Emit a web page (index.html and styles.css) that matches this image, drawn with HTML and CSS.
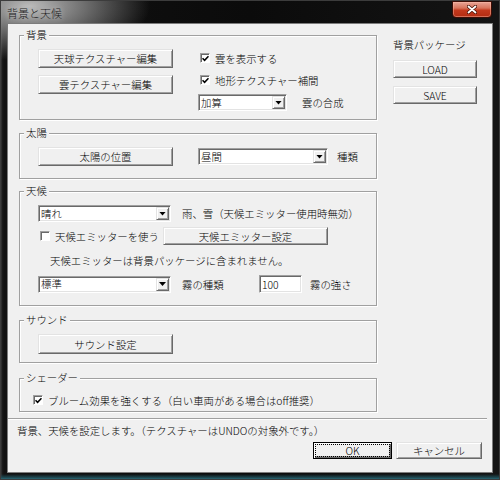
FILE: index.html
```html
<!DOCTYPE html>
<html lang="ja">
<head>
    <meta charset="UTF-8">
    <meta name="viewport" content="width=device-width, initial-scale=1.0">
    <title>背景と天候</title>
    <link rel="stylesheet" href="styles.css">
</head>
<body>
    <div class="window">
        <header class="titlebar">
            <span class="title">背景と天候</span>
            <button class="close-btn" aria-label="閉じる">
                <svg width="10" height="9" viewBox="0 0 10 9">
                    <path d="M1.5 1.5l7 6M8.5 1.5l-7 6" stroke="#4a1206" stroke-width="3.4" stroke-linecap="round"/>
                    <path d="M1.5 1.5l7 6M8.5 1.5l-7 6" stroke="#fff" stroke-width="1.8" stroke-linecap="round"/>
                </svg>
            </button>
        </header>

        <div class="frame">
            <div class="client">
                <div class="main">
                    <div class="groups">
                        <!-- 背景 -->
                        <fieldset class="group group-bg">
                            <legend>背景</legend>
                            <div class="group-body bg-body">
                                <div class="btn-col">
                                    <button class="btn btn-wide">天球テクスチャー編集</button>
                                    <button class="btn btn-wide">雲テクスチャー編集</button>
                                </div>
                                <div class="opt-col">
                                    <label class="check">
                                        <span class="box"><svg width="7" height="7" viewBox="0 0 7 7"><path d="M0.5 3.2 2.6 5.3 6.5 1.2" fill="none" stroke="#000" stroke-width="1.6"/></svg></span>
                                        雲を表示する
                                    </label>
                                    <label class="check">
                                        <span class="box"><svg width="7" height="7" viewBox="0 0 7 7"><path d="M0.5 3.2 2.6 5.3 6.5 1.2" fill="none" stroke="#000" stroke-width="1.6"/></svg></span>
                                        地形テクスチャー補間
                                    </label>
                                    <div class="row">
                                        <div class="combo combo-blend"><span class="combo-text">加算</span><span class="drop"></span></div>
                                        <span class="lbl-blend">雲の合成</span>
                                    </div>
                                </div>
                            </div>
                        </fieldset>

                        <!-- 太陽 -->
                        <fieldset class="group group-sun">
                            <legend>太陽</legend>
                            <div class="group-body row">
                                <button class="btn btn-wide">太陽の位置</button>
                                <div class="combo combo-sun"><span class="combo-text">昼間</span><span class="drop"></span></div>
                                <span class="lbl-kind">種類</span>
                            </div>
                        </fieldset>

                        <!-- 天候 -->
                        <fieldset class="group group-weather">
                            <legend>天候</legend>
                            <div class="group-body weather-body">
                                <div class="row">
                                    <div class="combo combo-weather"><span class="combo-text">晴れ</span><span class="drop"></span></div>
                                    <span class="lbl-rain">雨、雪（天候エミッター使用時無効）</span>
                                </div>
                                <div class="row">
                                    <label class="check check-emitter">
                                        <span class="box"></span>
                                        天候エミッターを使う
                                    </label>
                                    <button class="btn btn-emitter">天候エミッター設定</button>
                                </div>
                                <div class="note">天候エミッターは背景パッケージに含まれません。</div>
                                <div class="row">
                                    <div class="combo combo-weather"><span class="combo-text">標準</span><span class="drop"></span></div>
                                    <span class="lbl-fog">霧の種類</span>
                                    <div class="field">100</div>
                                    <span class="lbl-strength">霧の強さ</span>
                                </div>
                            </div>
                        </fieldset>

                        <!-- サウンド -->
                        <fieldset class="group group-sound">
                            <legend>サウンド</legend>
                            <div class="group-body">
                                <button class="btn btn-wide btn-sound">サウンド設定</button>
                            </div>
                        </fieldset>

                        <!-- シェーダー -->
                        <fieldset class="group group-shader">
                            <legend>シェーダー</legend>
                            <div class="group-body shader-body">
                                <label class="check">
                                    <span class="box"><svg width="7" height="7" viewBox="0 0 7 7"><path d="M0.5 3.2 2.6 5.3 6.5 1.2" fill="none" stroke="#000" stroke-width="1.6"/></svg></span>
                                    ブルーム効果を強くする（白い車両がある場合はoff推奨）
                                </label>
                            </div>
                        </fieldset>
                    </div>

                    <div class="package">
                        <span class="package-title">背景パッケージ</span>
                        <button class="btn btn-load">LOAD</button>
                        <button class="btn btn-save">SAVE</button>
                    </div>
                </div>

                <hr class="separator">

                <p class="status">背景、天候を設定します。（テクスチャーはUNDOの対象外です。）</p>
                <div class="actions">
                    <button class="btn btn-ok"><span class="focus">OK</span></button>
                    <button class="btn btn-cancel">キャンセル</button>
                </div>
            </div>
        </div>
    </div>
</body>
</html>
```

FILE: styles.css
```css
:root{
    --cor-face: #f0f0f0;
    --cor-light: #e3e3e3;
    --cor-shadow: #a0a0a0;
    --cor-dark: #696969;
    --cor-text: #000;

    --font-f: "Noto Sans CJK JP", "Noto Sans", sans-serif;
    --font-p: 10.4px;
    --font-w: 300;
}

*{
    margin: 0;
    padding: 0;
    box-sizing: border-box;
}

body{
    background-color: #000;
    font-family: var(--font-f);
    font-size: var(--font-p);
    font-weight: var(--font-w);
    color: var(--cor-text);
}

/* janela (moldura de vidro escuro) */
.window{
    width: 500px;
    height: 480px;
    display: flex;
    flex-direction: column;
    background:
        radial-gradient(ellipse 120px 55px at 30px 6px, rgba(195,195,195,.95), rgba(135,135,135,.8) 45%, rgba(40,40,40,0) 100%),
        linear-gradient(to top, #3a8392 0, #20505a 2px, rgba(20,40,45,0) 6px),
        linear-gradient(to right, #5a5a5a 0, #1d1d1d 2px, #111 4px, #0b0b0b 50%, #141414 100%);
    box-shadow: inset 0 0 0 1px #3c3c3c;
}

.titlebar{
    height: 24px;
    display: flex;
    justify-content: space-between;
    align-items: flex-start;
    padding: 0 8px 0 7px;
}

.title{
    margin-top: 6px;
    font-size: 11px;
    line-height: 14px;
    color: #1c1c1c;
    text-shadow: 0 0 6px rgba(255,255,255,.6);
}

.close-btn{
    margin-top: 1px;
    width: 40px;
    height: 17px;
    border: 1px solid #3d0d05;
    border-radius: 0 0 4px 4px;
    background: linear-gradient(#e8a597 0, #d8745c 40%, #c3391d 55%, #b22c12 100%);
    box-shadow: inset 0 0 0 1px rgba(255,190,170,.45);
    display: flex;
    align-items: center;
    justify-content: center;
}

.frame{
    flex: 1;
    display: flex;
    padding: 0 8px 8px;
}

.client{
    flex: 1;
    display: flex;
    flex-direction: column;
    background-color: var(--cor-face);
    box-shadow: 0 0 0 1px #7c7c7c;
}

.main{
    display: grid;
    grid-template-columns: 358px 84px;
    column-gap: 16px;
    align-items: start;
    padding: 5px 0 0 11px;
}

.groups{
    display: flex;
    flex-direction: column;
}

/* caixas de grupo */
.group{
    min-width: 0;
    border: 1px solid var(--cor-shadow);
    box-shadow: inset 1px 1px #fff, 1px 1px #fff;
}

.group legend{
    margin-left: 4px;
    padding: 0 2px;
    line-height: 12px;
    background-color: var(--cor-face);
}

.group-body{
    padding: 8px 0 8px 18px;
}

.group-sun{ margin-top: 7px; }
.group-weather{ margin-top: 6px; }
.group-sound{ margin-top: 8px; }
.group-shader{ margin-top: 9px; }

.group-sun .group-body,
.group-weather .group-body{
    padding-bottom: 12px;
}

.row{
    display: flex;
    align-items: center;
}

/* botoes classicos */
.btn{
    font: inherit;
    color: inherit;
    height: 19px;
    display: flex;
    align-items: center;
    justify-content: center;
    background-color: var(--cor-face);
    border: 1px solid;
    border-color: var(--cor-light) var(--cor-dark) var(--cor-dark) var(--cor-light);
    box-shadow: inset 1px 1px #fff, inset -1px -1px var(--cor-shadow);
}

.btn-wide{
    width: 135px;
    flex: none;
}

/* checkbox */
.check{
    height: 16px;
    display: flex;
    align-items: center;
    gap: 5px;
    padding-left: 2px;
}

.box{
    width: 10px;
    height: 10px;
    flex: none;
    display: flex;
    align-items: center;
    justify-content: center;
    background-color: #fff;
    border: 1px solid;
    border-color: var(--cor-shadow) #fff #fff var(--cor-shadow);
    box-shadow: inset 1px 1px var(--cor-dark);
}

/* combo box */
.combo{
    height: 17px;
    flex: none;
    display: flex;
    padding: 1px;
    background-color: #fff;
    border: 1px solid;
    border-color: var(--cor-shadow) #fff #fff var(--cor-shadow);
    box-shadow: inset 1px 1px var(--cor-dark), inset -1px -1px var(--cor-light);
}

.combo-text{
    flex: 1;
    display: flex;
    align-items: center;
    padding-left: 1px;
    line-height: 12px;
}

.drop{
    width: 13px;
    display: flex;
    align-items: center;
    justify-content: center;
    background-color: var(--cor-face);
    border: 1px solid;
    border-color: var(--cor-light) var(--cor-dark) var(--cor-dark) var(--cor-light);
    box-shadow: inset 1px 1px #fff, inset -1px -1px var(--cor-shadow);
}

.drop::after{
    content: "";
    width: 7px;
    height: 4px;
    background-color: #000;
    clip-path: polygon(0 0, 100% 0, 50% 100%);
}

.field{
    width: 43px;
    height: 18px;
    flex: none;
    display: flex;
    align-items: center;
    padding-left: 2px;
    background-color: #fff;
    border: 1px solid;
    border-color: var(--cor-shadow) #fff #fff var(--cor-shadow);
    box-shadow: inset 1px 1px var(--cor-dark), inset -1px -1px var(--cor-light);
}

/* 背景 */
.bg-body{
    display: grid;
    grid-template-columns: 135px auto;
    column-gap: 25px;
    align-items: start;
}

.btn-col{
    display: flex;
    flex-direction: column;
    gap: 7px;
}

.opt-col{
    display: flex;
    flex-direction: column;
    gap: 6px;
    padding-top: 1px;
}

.combo-blend{ width: 89px; }
.lbl-blend{ margin-left: 15px; }

/* 太陽 */
.group-sun .btn-wide{ margin-right: 25px; }
.combo-sun{ width: 130px; }
.lbl-kind{ margin-left: 9px; }

/* 天候 */
.weather-body{
    display: flex;
    flex-direction: column;
    gap: 5px;
}

.combo-weather{ width: 133px; }
.lbl-rain{ margin-left: 11px; }

.check-emitter{ width: 125px; }

.btn-emitter{
    width: 165px;
    height: 18px;
}

.note{
    height: 20px;
    display: flex;
    align-items: center;
    padding-left: 12px;
}

.lbl-fog{
    width: 77px;
    margin-left: 11px;
}

.lbl-strength{ margin-left: 8px; }

/* サウンド / シェーダー */
.btn-sound{ height: 20px; }

.shader-body{
    padding: 8px 0 3px 11px;
}

/* pacote de fundo */
.package{
    display: flex;
    flex-direction: column;
    padding-top: 10px;
}

.package-title{ line-height: 12px; }

.package .btn{ height: 18px; }
.btn-load{ margin-top: 9px; }
.btn-save{ margin-top: 8px; }

/* rodape */
.separator{
    margin: 6px 5px 0 0;
    border: 0;
    border-top: 1px solid var(--cor-shadow);
    border-bottom: 1px solid #fff;
}

.status{
    margin-top: 5px;
    padding-left: 9px;
    line-height: 12px;
}

.actions{
    margin-top: 5px;
    padding-right: 10px;
    display: flex;
    justify-content: flex-end;
    gap: 4px;
}

.actions .btn{ height: 17px; }

.btn-ok{
    width: 79px;
    padding: 1px;
    border-color: #000;
    box-shadow: inset 1px 1px #fff, inset -1px -1px var(--cor-dark), inset -2px -2px var(--cor-shadow);
}

.btn-ok .focus{
    flex: 1;
    align-self: stretch;
    display: flex;
    align-items: center;
    justify-content: center;
    border: 1px dotted #000;
}

.btn-cancel{ width: 86px; }
```
